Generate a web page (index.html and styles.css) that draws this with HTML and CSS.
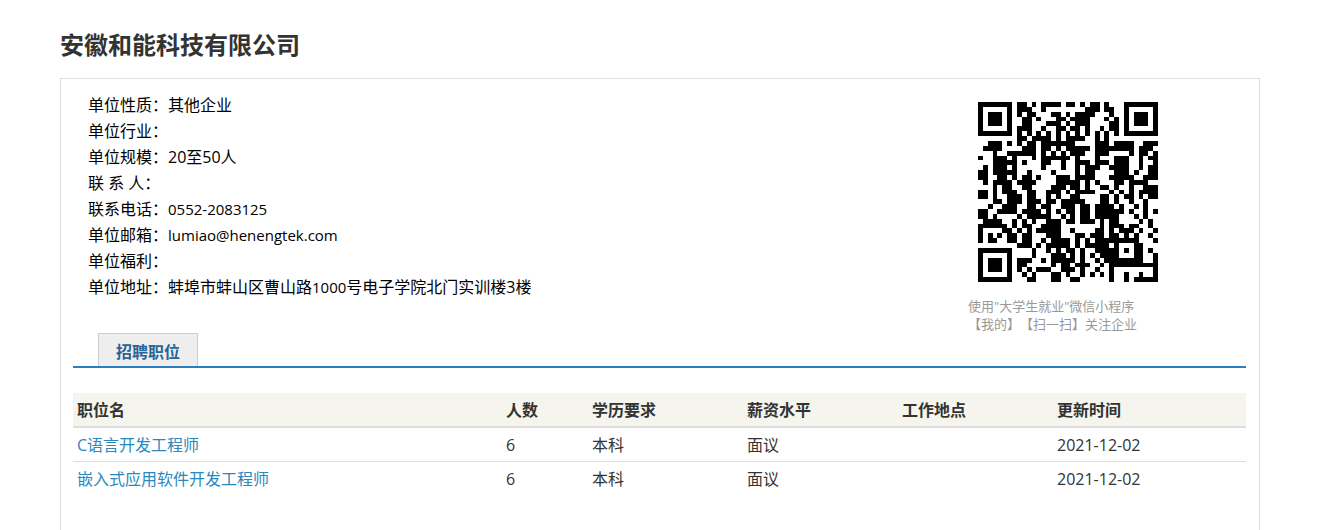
FILE: index.html
```
<!DOCTYPE html>
<html lang="zh-CN">
<head>
    <meta charset="UTF-8">
    <meta name="viewport" content="width=device-width, initial-scale=1.0">
    <title>安徽和能科技有限公司</title>
    <link rel="stylesheet" href="styles.css">
</head>
<body>
    <h1>安徽和能科技有限公司</h1>

    <div class="company">
        <div class="company-top">
            <ul class="info">
                <li>单位性质：其他企业</li>
                <li>单位行业：</li>
                <li>单位规模：20至50人</li>
                <li>联 系 人：</li>
                <li>联系电话：<span class="latin">0552-2083125</span></li>
                <li>单位邮箱：<span class="latin">lumiao@henengtek.com</span></li>
                <li>单位福利：</li>
                <li>单位地址：蚌埠市蚌山区曹山路<span class="latin">1000</span>号电子学院北门实训楼3楼</li>
            </ul>

            <div class="qrcode">
                <svg id="qr" viewBox="0 0 37 37" shape-rendering="crispEdges" role="img" aria-label="微信小程序"></svg>
                <p>使用"大学生就业"微信小程序<br>【我的】【扫一扫】关注企业</p>
            </div>
        </div>

        <div class="tabs">
            <button type="button" class="tab">招聘职位</button>
        </div>

        <table class="jobs">
            <thead>
                <tr>
                    <th class="col-name">职位名</th>
                    <th class="col-count">人数</th>
                    <th class="col-info">学历要求</th>
                    <th class="col-info">薪资水平</th>
                    <th class="col-info">工作地点</th>
                    <th>更新时间</th>
                </tr>
            </thead>
            <tbody>
                <tr>
                    <td><a href="#">C语言开发工程师</a></td>
                    <td>6</td>
                    <td>本科</td>
                    <td>面议</td>
                    <td></td>
                    <td>2021-12-02</td>
                </tr>
                <tr>
                    <td><a href="#">嵌入式应用软件开发工程师</a></td>
                    <td>6</td>
                    <td>本科</td>
                    <td>面议</td>
                    <td></td>
                    <td>2021-12-02</td>
                </tr>
            </tbody>
        </table>
    </div>

    <script src="qrcode.js"></script>
</body>
</html>
```
FILE: styles.css
```
body {
    display: flex;
    flex-direction: column;
    min-height: 100vh;
    box-sizing: border-box;
    margin: 0;
    padding: 28px 71px 0 60px;
    font-family: "Open Sans", "Noto Sans CJK SC", sans-serif;
    font-size: 16px;
    color: #333;
    background: #fff;
}

h1 {
    margin: 0 0 16px;
    font-size: 24px;
    line-height: 34px;
}

.company {
    flex: 1;
    padding: 0 13px 0 12px;
    border: 1px solid #ddd;
    border-bottom: none;
}

.company-top {
    display: flex;
    justify-content: space-between;
}

.info {
    margin: 0;
    padding: 13px 0 0 15px;
    list-style: none;
    line-height: 26px;
    color: #000;
}

.latin {
    font-size: 15px;
}

.qrcode {
    width: 278px;
    padding-top: 23px;
}

.qrcode svg {
    display: block;
    width: 180px;
    height: 180px;
    margin-left: 10px;
}

.qrcode p {
    margin: 15px 0 0;
    font-family: "Open Sans", "Noto Sans CJK SC", sans-serif;
    font-size: 13px;
    line-height: 18px;
    color: #999;
    text-spacing-trim: space-all;
}

.tabs {
    display: flex;
    padding-left: 25px;
    border-bottom: 2px solid #2a7fc0;
}

.tab {
    width: 100px;
    height: 33px;
    padding: 2px 0 0;
    border: 1px solid #ccc;
    border-bottom: none;
    background: #eee;
    color: #2a6496;
    font: bold 16px "Noto Sans CJK SC", sans-serif;
    cursor: pointer;
}

.jobs {
    width: 100%;
    margin-top: 25px;
    border-collapse: collapse;
    table-layout: fixed;
}

.jobs th,
.jobs td {
    height: 33px;
    padding: 0 4px;
    line-height: 24px;
    text-align: left;
}

.jobs th {
    background: #f5f5ed;
    border-bottom: 2px solid #ddd;
}

.jobs td {
    border-bottom: 1px solid #ddd;
}

.jobs tr:last-child td {
    border-bottom: none;
}

.jobs a {
    color: #2a88bd;
    text-decoration: none;
}

.col-name {
    width: 421px;
}

.col-count {
    width: 78px;
}

.col-info {
    width: 147px;
}
```
FILE: qrcode.js
```
// one string per row, # is a dark module
const rows = [
    '#######.##.#.####.##.#.##.#...#######',
    '#.....#.###..#........###.##..#.....#',
    '#.###.#.#.##...##.#.####...#..#.###.#',
    '#.###.#..##.#...##.####...#.#.#.###.#',
    '#.###.#..##...###.#.###....##.#.###.#',
    '#.....#.###..#..##.##.#..#.##.#.....#',
    '#######.#.#.#.#.#.#.#.#.#.#.#.#######',
    '........##.####.#.####..#.#..........',
    '..###.#.#.##.#######....###.####..###',
    '.####....###.##.#.#####.########.###.',
    '...#..######.#.#.#.###..###....#.##.#',
    '#..###.#...#.######.#...#...###..#.##',
    '...#####.#...##..#..###.###.###..#..#',
    '.#.###.#.....#...#..#.###..####..#.##',
    '##.#####..#....#....#.##....###.#..##',
    '##..##.#.##.#...###.####...#####..###',
    '.#.####.####....#####.#.#...##.####..#',
    '...#.##..##....###.##.#..##.#..#..###',
    '##.#.###..##..###.#.####...#.#.#.####',
    '##.#..###.##..#.#..##....##.#.##.#.##',
    '...##.###.###.##.#####...##.#..#..#..',
    '..#..###..##.##..###.##.####.#..#.#..',
    '##..####.####.#.#.##.##.######.#..#.#',
    '##.#....#.#####..#.#.##.#####...#.#..',
    '.####..#.#.#..###.##.###.#.##....#.#.',
    '######.#.##..####........#.###.##..#.',
    '#....##.#.#.#####..#....##.#.###.#..#',
    '#.#.#.##.##...###...##.###.##.#.#..#.',
    '#.##..##.##..#.####.#.#.#########...#',
    '........###.#.#####.#.#####.#...##...',
    '#######....#..#.#.##.#..#####.#.##.#.',
    '#.....#....#...###.#.#.#.####...##..#',
    '#.###.#.###..#.#####.#..#.########..#',
    '#.###.#.##.....#.##.###..#.##########',
    '#.###.#.#.#.###..###.#..#..#........#',
    '#.....#..#.#...##.#..#.#.#.#..#..#..#',
    '#######...##...##..##......#..#.#####'
];

let path = '';
rows.forEach((row, y) => {
    [...row].forEach((cell, x) => {
        if (cell === '#') {
            path += `M${x} ${y}h1v1h-1z`;
        }
    });
});

document.getElementById('qr').innerHTML = `<path d="${path}"/>`;
```
